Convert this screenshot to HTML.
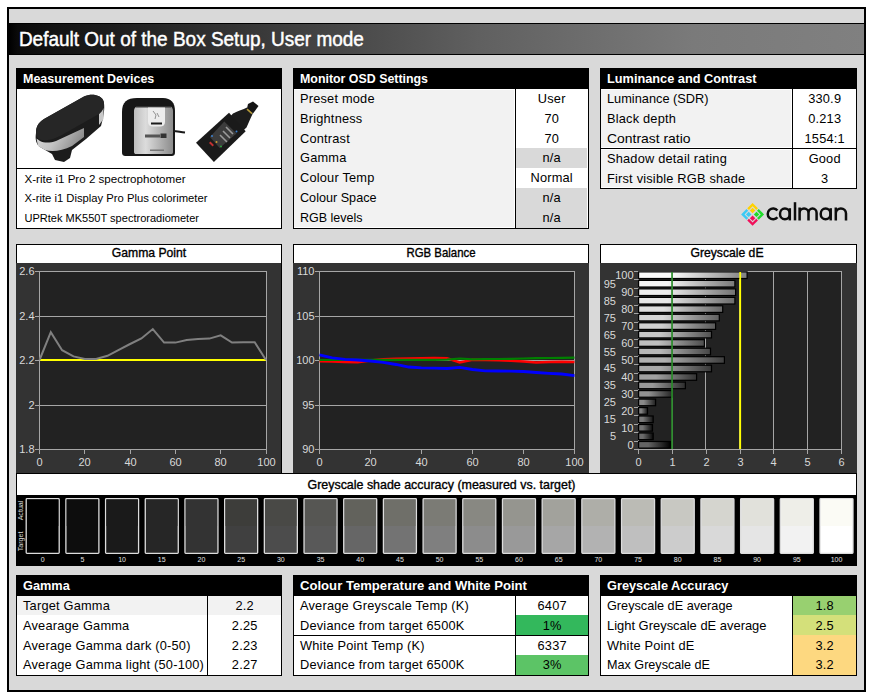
<!DOCTYPE html><html><head><meta charset="utf-8"><style>html,body{margin:0;padding:0;background:#fff;width:873px;height:692px;overflow:hidden}svg{display:block}</style></head><body><svg width="873" height="692" viewBox="0 0 873 692" font-family="'Liberation Sans', sans-serif">
<defs>
<linearGradient id="tg" x1="0" x2="1" y1="0" y2="0">
<stop offset="0" stop-color="#000"/><stop offset="0.01" stop-color="#0a0a0a"/><stop offset="0.05" stop-color="#121212"/>
<stop offset="0.3" stop-color="#3a3a3a"/><stop offset="0.55" stop-color="#606060"/><stop offset="0.8" stop-color="#7a7a7a"/><stop offset="1" stop-color="#808080"/>
</linearGradient>
</defs>
<rect x="0" y="0" width="873" height="692" fill="#fff" />
<rect x="7" y="7" width="859" height="685" fill="#000" />
<rect x="9" y="9" width="855" height="681" fill="#d9d9d9" />
<rect x="9" y="23" width="855" height="32" fill="#000" />
<rect x="9" y="24" width="855" height="30" fill="url(#tg)" />
<text x="18.9" y="45.6" font-size="19.8" fill="#fff" font-weight="normal" text-anchor="start" stroke="#fff" stroke-width="0.45" textLength="345" lengthAdjust="spacingAndGlyphs">Default Out of the Box Setup, User mode</text>
<rect x="16" y="68" width="266" height="161" fill="#000" />
<rect x="17" y="69" width="264" height="159" fill="#fff" />
<rect x="16" y="68" width="266" height="21" fill="#000" />
<text x="23" y="83" font-size="12.5" fill="#fff" font-weight="bold" text-anchor="start" >Measurement Devices</text>
<rect x="16" y="168" width="266" height="1" fill="#000" />
<text x="24.5" y="182.6" font-size="11.5" fill="#000" font-weight="normal" text-anchor="start"  textLength="161" lengthAdjust="spacingAndGlyphs">X-rite i1 Pro 2 spectrophotomer</text>
<text x="24.5" y="202.4" font-size="11.5" fill="#000" font-weight="normal" text-anchor="start"  textLength="183" lengthAdjust="spacingAndGlyphs">X-rite i1 Display Pro Plus colorimeter</text>
<text x="24.5" y="222.2" font-size="11.5" fill="#000" font-weight="normal" text-anchor="start"  textLength="174.5" lengthAdjust="spacingAndGlyphs">UPRtek MK550T spectroradiometer</text>
<g>
<defs><linearGradient id="sil1" x1="0" y1="0" x2="1" y2="0.3"><stop offset="0" stop-color="#d8d8d8"/><stop offset="0.5" stop-color="#c4c4c4"/><stop offset="1" stop-color="#8c8c8c"/></linearGradient></defs>
<path d="M36 133 C36 127 38 123 44 119 L84 96.5 C92 93 101 95 103.5 101 C105 106 104 113 103 118 L101 126 L86 139 L72 150 L70 158 L64 162 L55 160 L52 154 L40 147 C36 144 35 139 36 133 Z" fill="#1c1c1c"/>
<path d="M36.5 138.5 L40 141 C44 143 50 143 56 141 L84 128 L84 137 L72 146 C62 151 52 152 45 150 L38 146 Z" fill="url(#sil1)"/>
<path d="M99 114 L103.5 108 L103.5 119 L99 125 Z" fill="#c8c8c8"/>
<path d="M36 133 C36 127 38 123 44 119 L84 96.5 C92 93 101 95 103.5 101 C105 106 103 111 99 114 L60 136 C52 140 44 142 39 139 C36.5 137.5 36 135 36 133 Z" fill="#262626"/>
<defs><linearGradient id="d2" x1="0" x2="1"><stop offset="0" stop-color="#bdbdbd"/><stop offset="0.3" stop-color="#dcdcdc"/><stop offset="0.65" stop-color="#b4b4b4"/><stop offset="1" stop-color="#8c8c8c"/></linearGradient></defs>
<path d="M122 112 C122 102 127 98 137 98 L163 98 C171 98 175 103 175 111 L175 152 C175 155 174 156 171 156 L126 156 C123 156 122 155 122 152 Z" fill="#161616"/>
<path d="M134 111 C134 108 136 106 139 106 L169 106 C171.5 106 173 108 173 111 L173 152 C173 153.5 172.5 154 171 154 L136 154 C135 154 134 153.5 134 152 Z" fill="url(#d2)"/>
<rect x="136" y="106" width="35" height="1.5" fill="#333"/>
<path d="M148 107.5 L165 107.5 L165 122 C165 125 163 126.5 160 126.5 L153 126.5 C150 126.5 148 125 148 122 Z" fill="#ececec"/>
<path d="M153 111 L156 115 L155 119 M157 113 L159 117" stroke="#777" stroke-width="0.8" fill="none"/>
<rect x="151" y="122.5" width="11" height="2" fill="#1a1a1a"/>
<rect x="145" y="134.5" width="15" height="3" fill="#555"/>
<rect x="160.5" y="133.5" width="6" height="4.5" fill="#333"/>
<rect x="150" y="149.5" width="14" height="1.5" fill="#777"/>
<path d="M173 131 C177 131 180 132 185 132.5" stroke="#1a1a1a" stroke-width="2.2" fill="none"/>
<path d="M227 120 L233 113.5 C238 111 243 109.5 247 107.5 L252.8 113.5 C251 117 249 122 246.5 127.5 L239.5 134 Z" fill="#1c1c1c"/>
<path d="M248 104 L253 101.5 L258.5 106 L253 113.5 L247 108.5 Z" fill="#151515"/>
<path d="M247.5 108.5 L252.5 113 L251.5 114.2 L246.5 109.7 Z" fill="#b59a3a"/>
<path d="M196 142.8 L229 112.7 L245.7 131.2 L213.9 161.9 Z" fill="#1a1a1a"/>
<path d="M224.3 121.4 L236.5 133.5 L219.7 148 L209.9 137 Z" fill="#3c3c3c"/>
<path d="M226 127 L233 134 M223 131 L230 138 M220 135 L227 142" stroke="#9a9a9a" stroke-width="1.6"/>
<rect x="209" y="143" width="5" height="2" fill="#c03030" transform="rotate(45 211.5 144)"/>
<circle cx="212" cy="136" r="1" fill="#3a7fd0"/><circle cx="216.5" cy="142" r="1" fill="#d0a030"/><circle cx="221" cy="146.5" r="1" fill="#30a040"/><circle cx="236.5" cy="131.5" r="1" fill="#3a7fd0"/>
</g>
<rect x="293" y="68" width="296" height="161" fill="#000" />
<rect x="294" y="69" width="294" height="159" fill="#fff" />
<rect x="293" y="68" width="296" height="21" fill="#000" />
<text x="300" y="83" font-size="12.75" fill="#fff" font-weight="bold" text-anchor="start"  textLength="128" lengthAdjust="spacingAndGlyphs">Monitor OSD Settings</text>
<rect x="294" y="90" width="220" height="137" fill="#f2f2f2" />
<rect x="515" y="89" width="1" height="139" fill="#000" />
<text x="300" y="102.9" font-size="12.8" fill="#000" font-weight="normal" text-anchor="start"  letter-spacing="0.2">Preset mode</text>
<text x="551.7" y="102.9" font-size="12.8" fill="#000" font-weight="normal" text-anchor="middle"  letter-spacing="0.2">User</text>
<text x="300" y="122.76" font-size="12.8" fill="#000" font-weight="normal" text-anchor="start"  letter-spacing="0.2">Brightness</text>
<text x="551.7" y="122.76" font-size="12.8" fill="#000" font-weight="normal" text-anchor="middle"  letter-spacing="0.2">70</text>
<text x="300" y="142.62" font-size="12.8" fill="#000" font-weight="normal" text-anchor="start"  letter-spacing="0.2">Contrast</text>
<text x="551.7" y="142.62" font-size="12.8" fill="#000" font-weight="normal" text-anchor="middle"  letter-spacing="0.2">70</text>
<rect x="516" y="148" width="71" height="20" fill="#d9d9d9" />
<text x="300" y="162.48000000000002" font-size="12.8" fill="#000" font-weight="normal" text-anchor="start"  letter-spacing="0.2">Gamma</text>
<text x="551.7" y="162.48000000000002" font-size="12.8" fill="#000" font-weight="normal" text-anchor="middle"  letter-spacing="0.2">n/a</text>
<text x="300" y="182.34" font-size="12.8" fill="#000" font-weight="normal" text-anchor="start"  letter-spacing="0.2">Colour Temp</text>
<text x="551.7" y="182.34" font-size="12.8" fill="#000" font-weight="normal" text-anchor="middle"  letter-spacing="0.2">Normal</text>
<rect x="516" y="188" width="71" height="20" fill="#d9d9d9" />
<text x="300" y="202.2" font-size="12.8" fill="#000" font-weight="normal" text-anchor="start"  textLength="76.5" lengthAdjust="spacingAndGlyphs">Colour Space</text>
<text x="551.7" y="202.2" font-size="12.8" fill="#000" font-weight="normal" text-anchor="middle"  letter-spacing="0.2">n/a</text>
<rect x="516" y="208" width="71" height="20" fill="#d9d9d9" />
<text x="300" y="222.06" font-size="12.8" fill="#000" font-weight="normal" text-anchor="start"  textLength="62.5" lengthAdjust="spacingAndGlyphs">RGB levels</text>
<text x="551.7" y="222.06" font-size="12.8" fill="#000" font-weight="normal" text-anchor="middle"  letter-spacing="0.2">n/a</text>
<rect x="600" y="68" width="257" height="121" fill="#000" />
<rect x="601" y="69" width="255" height="119" fill="#fff" />
<rect x="600" y="68" width="257" height="21" fill="#000" />
<text x="607" y="83" font-size="12.75" fill="#fff" font-weight="bold" text-anchor="start" >Luminance and Contrast</text>
<rect x="601" y="90" width="190" height="57" fill="#f2f2f2" />
<rect x="601" y="150" width="190" height="37" fill="#f2f2f2" />
<rect x="792" y="89" width="1" height="99" fill="#000" />
<rect x="600" y="148" width="257" height="1" fill="#000" />
<text x="607" y="102.9" font-size="12.8" fill="#000" font-weight="normal" text-anchor="start"  textLength="101.5" lengthAdjust="spacingAndGlyphs">Luminance (SDR)</text>
<text x="824.7" y="102.9" font-size="12.8" fill="#000" font-weight="normal" text-anchor="middle"  letter-spacing="0.2">330.9</text>
<text x="607" y="122.76" font-size="12.8" fill="#000" font-weight="normal" text-anchor="start"  letter-spacing="0.2">Black depth</text>
<text x="824.7" y="122.76" font-size="12.8" fill="#000" font-weight="normal" text-anchor="middle"  letter-spacing="0.2">0.213</text>
<text x="607" y="142.62" font-size="12.8" fill="#000" font-weight="normal" text-anchor="start"  textLength="83.5" lengthAdjust="spacingAndGlyphs">Contrast ratio</text>
<text x="824.7" y="142.62" font-size="12.8" fill="#000" font-weight="normal" text-anchor="middle"  letter-spacing="0.2">1554:1</text>
<text x="607" y="163.18" font-size="12.8" fill="#000" font-weight="normal" text-anchor="start"  letter-spacing="0.2">Shadow detail rating</text>
<text x="824.7" y="163.18" font-size="12.8" fill="#000" font-weight="normal" text-anchor="middle"  letter-spacing="0.2">Good</text>
<text x="607" y="183.04" font-size="12.8" fill="#000" font-weight="normal" text-anchor="start"  letter-spacing="0.2">First visible RGB shade</text>
<text x="824.7" y="183.04" font-size="12.8" fill="#000" font-weight="normal" text-anchor="middle"  letter-spacing="0.2">3</text>
<g transform="translate(752.6 214.4) rotate(45)">
<g transform="scale(1 1)"><path d="M-8.1 -8.1 L-0.55 -8.1 L-0.55 -5.699999999999999 L-5.699999999999999 -5.699999999999999 L-5.699999999999999 -0.55 L-8.1 -0.55 Z M-4.699999999999999 -4.699999999999999 L-0.8500000000000001 -4.699999999999999 L-0.8500000000000001 -0.8500000000000001 L-4.699999999999999 -0.8500000000000001 Z" fill="#ffd200"/></g>
<g transform="scale(-1 1)"><path d="M-8.1 -8.1 L-0.55 -8.1 L-0.55 -5.699999999999999 L-5.699999999999999 -5.699999999999999 L-5.699999999999999 -0.55 L-8.1 -0.55 Z M-4.699999999999999 -4.699999999999999 L-0.8500000000000001 -4.699999999999999 L-0.8500000000000001 -0.8500000000000001 L-4.699999999999999 -0.8500000000000001 Z" fill="#1fdc2a"/></g>
<g transform="scale(1 -1)"><path d="M-8.1 -8.1 L-0.55 -8.1 L-0.55 -5.699999999999999 L-5.699999999999999 -5.699999999999999 L-5.699999999999999 -0.55 L-8.1 -0.55 Z M-4.699999999999999 -4.699999999999999 L-0.8500000000000001 -4.699999999999999 L-0.8500000000000001 -0.8500000000000001 L-4.699999999999999 -0.8500000000000001 Z" fill="#3ccaf5"/></g>
<g transform="scale(-1 -1)"><path d="M-8.1 -8.1 L-0.55 -8.1 L-0.55 -5.699999999999999 L-5.699999999999999 -5.699999999999999 L-5.699999999999999 -0.55 L-8.1 -0.55 Z M-4.699999999999999 -4.699999999999999 L-0.8500000000000001 -4.699999999999999 L-0.8500000000000001 -0.8500000000000001 L-4.699999999999999 -0.8500000000000001 Z" fill="#f0105a"/></g>
</g>
<g fill="none" stroke="#0d0d0d" stroke-width="2.5"><path d="M777.4 210.6 A5.4 5.4 0 1 0 777.4 217.2"/><ellipse cx="784.9" cy="213.9" rx="4.9" ry="5.35"/><path d="M789.8 208.2 V220.4"/><path d="M795 202.2 V220.4"/><path d="M799.6 207.6 V220.4 M799.6 213 A4.45 4.4 0 0 1 808.5 213 V220.4 M808.5 213 A4.05 4.4 0 0 1 816.6 213 V220.4"/><ellipse cx="825.6" cy="213.9" rx="4.9" ry="5.35"/><path d="M830.7 208.2 V220.4"/><path d="M835.8 207.6 V220.4 M835.8 213.6 A5.1 5.1 0 0 1 846 213.6 V220.4"/></g>
<rect x="16" y="244" width="266" height="19" fill="#000" />
<rect x="17" y="245" width="264" height="18" fill="#fff" />
<rect x="16" y="263" width="266" height="210" fill="#333333" />
<text x="149.0" y="257" font-size="12.2" fill="#000" font-weight="normal" text-anchor="middle" stroke="#000" stroke-width="0.35" textLength="74.5" lengthAdjust="spacingAndGlyphs">Gamma Point</text>
<rect x="281" y="263" width="1" height="210" fill="#000" />
<rect x="39" y="271" width="228" height="179" fill="#a6a6a6" />
<rect x="40" y="272" width="226" height="177" fill="#222222" />
<rect x="35" y="271" width="4" height="1" fill="#a6a6a6" />
<text x="34.5" y="275.3" font-size="11" fill="#d9d9d9" font-weight="normal" text-anchor="end" >2.6</text>
<rect x="39" y="316" width="228" height="1" fill="#a6a6a6" />
<rect x="35" y="316" width="4" height="1" fill="#a6a6a6" />
<text x="34.5" y="320.3" font-size="11" fill="#d9d9d9" font-weight="normal" text-anchor="end" >2.4</text>
<rect x="39" y="360" width="228" height="1" fill="#a6a6a6" />
<rect x="35" y="360" width="4" height="1" fill="#a6a6a6" />
<text x="34.5" y="364.3" font-size="11" fill="#d9d9d9" font-weight="normal" text-anchor="end" >2.2</text>
<rect x="39" y="405" width="228" height="1" fill="#a6a6a6" />
<rect x="35" y="405" width="4" height="1" fill="#a6a6a6" />
<text x="34.5" y="409.3" font-size="11" fill="#d9d9d9" font-weight="normal" text-anchor="end" >2</text>
<rect x="35" y="449" width="4" height="1" fill="#a6a6a6" />
<text x="34.5" y="453.3" font-size="11" fill="#d9d9d9" font-weight="normal" text-anchor="end" >1.8</text>
<rect x="39" y="449" width="1" height="5" fill="#a6a6a6" />
<text x="39.5" y="466" font-size="11" fill="#d9d9d9" font-weight="normal" text-anchor="middle" >0</text>
<rect x="84" y="449" width="1" height="5" fill="#a6a6a6" />
<text x="84.5" y="466" font-size="11" fill="#d9d9d9" font-weight="normal" text-anchor="middle" >20</text>
<rect x="130" y="449" width="1" height="5" fill="#a6a6a6" />
<text x="130.5" y="466" font-size="11" fill="#d9d9d9" font-weight="normal" text-anchor="middle" >40</text>
<rect x="175" y="449" width="1" height="5" fill="#a6a6a6" />
<text x="175.5" y="466" font-size="11" fill="#d9d9d9" font-weight="normal" text-anchor="middle" >60</text>
<rect x="220" y="449" width="1" height="5" fill="#a6a6a6" />
<text x="220.5" y="466" font-size="11" fill="#d9d9d9" font-weight="normal" text-anchor="middle" >80</text>
<rect x="266" y="449" width="1" height="5" fill="#a6a6a6" />
<text x="266.5" y="466" font-size="11" fill="#d9d9d9" font-weight="normal" text-anchor="middle" >100</text>
<rect x="40" y="359" width="226" height="2" fill="#ffff00" />
<polyline points="39.5,360.0 50.8,332.2 62.1,350.2 73.5,356.4 84.8,358.9 96.1,358.9 107.5,355.8 118.8,349.8 130.1,344.0 141.4,338.4 152.8,329.1 164.1,342.6 175.4,342.6 186.7,340.0 198.1,339.1 209.4,338.6 220.7,335.3 232.0,342.6 243.3,342.2 254.7,342.2 266.0,360.0" fill="none" stroke="#808080" stroke-width="2" stroke-linejoin="miter"/>
<rect x="293" y="244" width="296" height="19" fill="#000" />
<rect x="294" y="245" width="294" height="18" fill="#fff" />
<rect x="293" y="263" width="296" height="210" fill="#333333" />
<text x="441.0" y="257" font-size="12.2" fill="#000" font-weight="normal" text-anchor="middle" stroke="#000" stroke-width="0.35" textLength="69" lengthAdjust="spacingAndGlyphs">RGB Balance</text>
<rect x="319" y="271" width="256" height="179" fill="#a6a6a6" />
<rect x="320" y="272" width="254" height="177" fill="#222222" />
<rect x="315" y="271" width="4" height="1" fill="#a6a6a6" />
<text x="314.5" y="275.3" font-size="11" fill="#d9d9d9" font-weight="normal" text-anchor="end" >110</text>
<rect x="319" y="316" width="256" height="1" fill="#a6a6a6" />
<rect x="315" y="316" width="4" height="1" fill="#a6a6a6" />
<text x="314.5" y="320.3" font-size="11" fill="#d9d9d9" font-weight="normal" text-anchor="end" >105</text>
<rect x="319" y="360" width="256" height="1" fill="#a6a6a6" />
<rect x="315" y="360" width="4" height="1" fill="#a6a6a6" />
<text x="314.5" y="364.3" font-size="11" fill="#d9d9d9" font-weight="normal" text-anchor="end" >100</text>
<rect x="319" y="405" width="256" height="1" fill="#a6a6a6" />
<rect x="315" y="405" width="4" height="1" fill="#a6a6a6" />
<text x="314.5" y="409.3" font-size="11" fill="#d9d9d9" font-weight="normal" text-anchor="end" >95</text>
<rect x="315" y="449" width="4" height="1" fill="#a6a6a6" />
<text x="314.5" y="453.3" font-size="11" fill="#d9d9d9" font-weight="normal" text-anchor="end" >90</text>
<rect x="319" y="449" width="1" height="5" fill="#a6a6a6" />
<text x="319.5" y="466" font-size="11" fill="#d9d9d9" font-weight="normal" text-anchor="middle" >0</text>
<rect x="370" y="449" width="1" height="5" fill="#a6a6a6" />
<text x="370.5" y="466" font-size="11" fill="#d9d9d9" font-weight="normal" text-anchor="middle" >20</text>
<rect x="421" y="449" width="1" height="5" fill="#a6a6a6" />
<text x="421.5" y="466" font-size="11" fill="#d9d9d9" font-weight="normal" text-anchor="middle" >40</text>
<rect x="472" y="449" width="1" height="5" fill="#a6a6a6" />
<text x="472.5" y="466" font-size="11" fill="#d9d9d9" font-weight="normal" text-anchor="middle" >60</text>
<rect x="523" y="449" width="1" height="5" fill="#a6a6a6" />
<text x="523.5" y="466" font-size="11" fill="#d9d9d9" font-weight="normal" text-anchor="middle" >80</text>
<rect x="574" y="449" width="1" height="5" fill="#a6a6a6" />
<text x="574.5" y="466" font-size="11" fill="#d9d9d9" font-weight="normal" text-anchor="middle" >100</text>
<polyline points="319.5,361.3 332.2,361.6 345.0,362.0 357.8,362.2 370.5,360.5 383.2,359.3 396.0,358.8 408.8,358.5 421.5,358.2 434.2,358.0 447.0,358.2 459.8,362.4 472.5,359.8 485.2,360.0 498.0,360.3 510.8,360.8 523.5,361.5 536.2,362.4 549.0,362.0 561.8,361.8 574.5,362.0" fill="none" stroke="#ff0000" stroke-width="2.5"/>
<polyline points="319.5,360.0 332.2,360.0 345.0,359.9 357.8,359.9 370.5,359.8 383.2,359.8 396.0,359.8 408.8,359.8 421.5,359.8 434.2,359.8 447.0,359.6 459.8,358.5 472.5,359.3 485.2,359.2 498.0,359.0 510.8,358.8 523.5,358.5 536.2,358.2 549.0,358.0 561.8,357.8 574.5,357.7" fill="none" stroke="#008000" stroke-width="2.2"/>
<polyline points="319.5,354.9 332.2,357.8 345.0,359.3 357.8,360.0 370.5,361.0 383.2,362.3 396.0,364.5 408.8,367.0 421.5,367.8 434.2,368.2 447.0,368.5 459.8,367.3 472.5,369.5 485.2,370.8 498.0,371.0 510.8,371.2 523.5,371.5 536.2,372.5 549.0,373.3 561.8,374.0 574.5,375.6" fill="none" stroke="#0000ff" stroke-width="2.8"/>
<rect x="600" y="244" width="257" height="19" fill="#000" />
<rect x="601" y="245" width="255" height="18" fill="#fff" />
<rect x="600" y="263" width="257" height="210" fill="#333333" />
<text x="727.0" y="257" font-size="12.2" fill="#000" font-weight="normal" text-anchor="middle" stroke="#000" stroke-width="0.35" textLength="73" lengthAdjust="spacingAndGlyphs">Greyscale dE</text>
<rect x="638" y="271" width="204" height="179" fill="#a6a6a6" />
<rect x="639" y="272" width="202" height="177" fill="#222222" />
<rect x="672" y="271" width="1" height="178" fill="#a6a6a6" />
<rect x="705" y="271" width="1" height="178" fill="#a6a6a6" />
<rect x="739" y="271" width="1" height="178" fill="#a6a6a6" />
<rect x="773" y="271" width="1" height="178" fill="#a6a6a6" />
<rect x="807" y="271" width="1" height="178" fill="#a6a6a6" />
<rect x="638" y="449" width="1" height="5" fill="#a6a6a6" />
<text x="638.5" y="466" font-size="11" fill="#d9d9d9" font-weight="normal" text-anchor="middle" >0</text>
<rect x="672" y="449" width="1" height="5" fill="#a6a6a6" />
<text x="672.5" y="466" font-size="11" fill="#d9d9d9" font-weight="normal" text-anchor="middle" >1</text>
<rect x="706" y="449" width="1" height="5" fill="#a6a6a6" />
<text x="706.5" y="466" font-size="11" fill="#d9d9d9" font-weight="normal" text-anchor="middle" >2</text>
<rect x="740" y="449" width="1" height="5" fill="#a6a6a6" />
<text x="740.5" y="466" font-size="11" fill="#d9d9d9" font-weight="normal" text-anchor="middle" >3</text>
<rect x="773" y="449" width="1" height="5" fill="#a6a6a6" />
<text x="773.5" y="466" font-size="11" fill="#d9d9d9" font-weight="normal" text-anchor="middle" >4</text>
<rect x="807" y="449" width="1" height="5" fill="#a6a6a6" />
<text x="807.5" y="466" font-size="11" fill="#d9d9d9" font-weight="normal" text-anchor="middle" >5</text>
<rect x="841" y="449" width="1" height="5" fill="#a6a6a6" />
<text x="841.5" y="466" font-size="11" fill="#d9d9d9" font-weight="normal" text-anchor="middle" >6</text>
<defs>
<linearGradient id="b0" x1="0" x2="1"><stop offset="0" stop-color="rgb(100,100,100)"/><stop offset="0.3" stop-color="rgb(100,100,100)"/><stop offset="1" stop-color="rgb(0,0,0)"/></linearGradient>
<linearGradient id="b1" x1="0" x2="1"><stop offset="0" stop-color="rgb(107,107,107)"/><stop offset="0.3" stop-color="rgb(107,107,107)"/><stop offset="1" stop-color="rgb(6,6,6)"/></linearGradient>
<linearGradient id="b2" x1="0" x2="1"><stop offset="0" stop-color="rgb(115,115,115)"/><stop offset="0.3" stop-color="rgb(115,115,115)"/><stop offset="1" stop-color="rgb(12,12,12)"/></linearGradient>
<linearGradient id="b3" x1="0" x2="1"><stop offset="0" stop-color="rgb(122,122,122)"/><stop offset="0.3" stop-color="rgb(122,122,122)"/><stop offset="1" stop-color="rgb(19,19,19)"/></linearGradient>
<linearGradient id="b4" x1="0" x2="1"><stop offset="0" stop-color="rgb(130,130,130)"/><stop offset="0.3" stop-color="rgb(130,130,130)"/><stop offset="1" stop-color="rgb(25,25,25)"/></linearGradient>
<linearGradient id="b5" x1="0" x2="1"><stop offset="0" stop-color="rgb(138,138,138)"/><stop offset="0.3" stop-color="rgb(138,138,138)"/><stop offset="1" stop-color="rgb(31,31,31)"/></linearGradient>
<linearGradient id="b6" x1="0" x2="1"><stop offset="0" stop-color="rgb(145,145,145)"/><stop offset="0.3" stop-color="rgb(145,145,145)"/><stop offset="1" stop-color="rgb(38,38,38)"/></linearGradient>
<linearGradient id="b7" x1="0" x2="1"><stop offset="0" stop-color="rgb(153,153,153)"/><stop offset="0.3" stop-color="rgb(153,153,153)"/><stop offset="1" stop-color="rgb(44,44,44)"/></linearGradient>
<linearGradient id="b8" x1="0" x2="1"><stop offset="0" stop-color="rgb(161,161,161)"/><stop offset="0.3" stop-color="rgb(161,161,161)"/><stop offset="1" stop-color="rgb(51,51,51)"/></linearGradient>
<linearGradient id="b9" x1="0" x2="1"><stop offset="0" stop-color="rgb(168,168,168)"/><stop offset="0.3" stop-color="rgb(168,168,168)"/><stop offset="1" stop-color="rgb(57,57,57)"/></linearGradient>
<linearGradient id="b10" x1="0" x2="1"><stop offset="0" stop-color="rgb(176,176,176)"/><stop offset="0.3" stop-color="rgb(176,176,176)"/><stop offset="1" stop-color="rgb(63,63,63)"/></linearGradient>
<linearGradient id="b11" x1="0" x2="1"><stop offset="0" stop-color="rgb(184,184,184)"/><stop offset="0.3" stop-color="rgb(184,184,184)"/><stop offset="1" stop-color="rgb(70,70,70)"/></linearGradient>
<linearGradient id="b12" x1="0" x2="1"><stop offset="0" stop-color="rgb(191,191,191)"/><stop offset="0.3" stop-color="rgb(191,191,191)"/><stop offset="1" stop-color="rgb(76,76,76)"/></linearGradient>
<linearGradient id="b13" x1="0" x2="1"><stop offset="0" stop-color="rgb(199,199,199)"/><stop offset="0.3" stop-color="rgb(199,199,199)"/><stop offset="1" stop-color="rgb(82,82,82)"/></linearGradient>
<linearGradient id="b14" x1="0" x2="1"><stop offset="0" stop-color="rgb(207,207,207)"/><stop offset="0.3" stop-color="rgb(207,207,207)"/><stop offset="1" stop-color="rgb(89,89,89)"/></linearGradient>
<linearGradient id="b15" x1="0" x2="1"><stop offset="0" stop-color="rgb(214,214,214)"/><stop offset="0.3" stop-color="rgb(214,214,214)"/><stop offset="1" stop-color="rgb(95,95,95)"/></linearGradient>
<linearGradient id="b16" x1="0" x2="1"><stop offset="0" stop-color="rgb(222,222,222)"/><stop offset="0.3" stop-color="rgb(222,222,222)"/><stop offset="1" stop-color="rgb(102,102,102)"/></linearGradient>
<linearGradient id="b17" x1="0" x2="1"><stop offset="0" stop-color="rgb(230,230,230)"/><stop offset="0.3" stop-color="rgb(230,230,230)"/><stop offset="1" stop-color="rgb(108,108,108)"/></linearGradient>
<linearGradient id="b18" x1="0" x2="1"><stop offset="0" stop-color="rgb(237,237,237)"/><stop offset="0.3" stop-color="rgb(237,237,237)"/><stop offset="1" stop-color="rgb(114,114,114)"/></linearGradient>
<linearGradient id="b19" x1="0" x2="1"><stop offset="0" stop-color="rgb(245,245,245)"/><stop offset="0.3" stop-color="rgb(245,245,245)"/><stop offset="1" stop-color="rgb(121,121,121)"/></linearGradient>
<linearGradient id="b20" x1="0" x2="1"><stop offset="0" stop-color="rgb(252,252,252)"/><stop offset="0.3" stop-color="rgb(252,252,252)"/><stop offset="1" stop-color="rgb(127,127,127)"/></linearGradient>
</defs>
<rect x="634" y="449" width="4" height="1" fill="#a6a6a6" />
<rect x="634" y="441" width="4" height="1" fill="#a6a6a6" />
<rect x="634" y="432" width="4" height="1" fill="#a6a6a6" />
<rect x="634" y="424" width="4" height="1" fill="#a6a6a6" />
<rect x="634" y="415" width="4" height="1" fill="#a6a6a6" />
<rect x="634" y="407" width="4" height="1" fill="#a6a6a6" />
<rect x="634" y="398" width="4" height="1" fill="#a6a6a6" />
<rect x="634" y="390" width="4" height="1" fill="#a6a6a6" />
<rect x="634" y="381" width="4" height="1" fill="#a6a6a6" />
<rect x="634" y="373" width="4" height="1" fill="#a6a6a6" />
<rect x="634" y="364" width="4" height="1" fill="#a6a6a6" />
<rect x="634" y="356" width="4" height="1" fill="#a6a6a6" />
<rect x="634" y="347" width="4" height="1" fill="#a6a6a6" />
<rect x="634" y="339" width="4" height="1" fill="#a6a6a6" />
<rect x="634" y="330" width="4" height="1" fill="#a6a6a6" />
<rect x="634" y="322" width="4" height="1" fill="#a6a6a6" />
<rect x="634" y="313" width="4" height="1" fill="#a6a6a6" />
<rect x="634" y="305" width="4" height="1" fill="#a6a6a6" />
<rect x="634" y="296" width="4" height="1" fill="#a6a6a6" />
<rect x="634" y="288" width="4" height="1" fill="#a6a6a6" />
<rect x="634" y="279" width="4" height="1" fill="#a6a6a6" />
<rect x="634" y="271" width="4" height="1" fill="#a6a6a6" />
<rect x="638.6" y="441.5" width="31.9" height="6.6" fill="url(#b0)" stroke="#000" stroke-width="1.2"/>
<text x="633.5" y="448.76190476190476" font-size="11" fill="#d9d9d9" font-weight="normal" text-anchor="end" >0</text>
<rect x="638.6" y="433.0" width="14.6" height="6.6" fill="url(#b1)" stroke="#000" stroke-width="1.2"/>
<text x="616" y="440.2857142857143" font-size="11" fill="#d9d9d9" font-weight="normal" text-anchor="end" >5</text>
<rect x="638.6" y="424.5" width="13.9" height="6.6" fill="url(#b2)" stroke="#000" stroke-width="1.2"/>
<text x="633.5" y="431.8095238095238" font-size="11" fill="#d9d9d9" font-weight="normal" text-anchor="end" >10</text>
<rect x="638.6" y="416.0" width="14.6" height="6.6" fill="url(#b3)" stroke="#000" stroke-width="1.2"/>
<text x="616" y="423.3333333333333" font-size="11" fill="#d9d9d9" font-weight="normal" text-anchor="end" >15</text>
<rect x="638.6" y="407.6" width="8.9" height="6.6" fill="url(#b4)" stroke="#000" stroke-width="1.2"/>
<text x="633.5" y="414.85714285714283" font-size="11" fill="#d9d9d9" font-weight="normal" text-anchor="end" >20</text>
<rect x="638.6" y="399.1" width="17.0" height="6.6" fill="url(#b5)" stroke="#000" stroke-width="1.2"/>
<text x="616" y="406.3809523809524" font-size="11" fill="#d9d9d9" font-weight="normal" text-anchor="end" >25</text>
<rect x="638.6" y="390.6" width="33.6" height="6.6" fill="url(#b6)" stroke="#000" stroke-width="1.2"/>
<text x="633.5" y="397.9047619047619" font-size="11" fill="#d9d9d9" font-weight="normal" text-anchor="end" >30</text>
<rect x="638.6" y="382.1" width="46.8" height="6.6" fill="url(#b7)" stroke="#000" stroke-width="1.2"/>
<text x="616" y="389.42857142857144" font-size="11" fill="#d9d9d9" font-weight="normal" text-anchor="end" >35</text>
<rect x="638.6" y="373.7" width="58.0" height="6.6" fill="url(#b8)" stroke="#000" stroke-width="1.2"/>
<text x="633.5" y="380.95238095238096" font-size="11" fill="#d9d9d9" font-weight="normal" text-anchor="end" >40</text>
<rect x="638.6" y="365.2" width="72.9" height="6.6" fill="url(#b9)" stroke="#000" stroke-width="1.2"/>
<text x="616" y="372.4761904761905" font-size="11" fill="#d9d9d9" font-weight="normal" text-anchor="end" >45</text>
<rect x="638.6" y="356.7" width="85.8" height="6.6" fill="url(#b10)" stroke="#000" stroke-width="1.2"/>
<text x="633.5" y="364.0" font-size="11" fill="#d9d9d9" font-weight="normal" text-anchor="end" >50</text>
<rect x="638.6" y="348.2" width="71.9" height="6.6" fill="url(#b11)" stroke="#000" stroke-width="1.2"/>
<text x="616" y="355.5238095238095" font-size="11" fill="#d9d9d9" font-weight="normal" text-anchor="end" >55</text>
<rect x="638.6" y="339.7" width="65.8" height="6.6" fill="url(#b12)" stroke="#000" stroke-width="1.2"/>
<text x="633.5" y="347.04761904761904" font-size="11" fill="#d9d9d9" font-weight="normal" text-anchor="end" >60</text>
<rect x="638.6" y="331.3" width="72.9" height="6.6" fill="url(#b13)" stroke="#000" stroke-width="1.2"/>
<text x="616" y="338.57142857142856" font-size="11" fill="#d9d9d9" font-weight="normal" text-anchor="end" >65</text>
<rect x="638.6" y="322.8" width="77.0" height="6.6" fill="url(#b14)" stroke="#000" stroke-width="1.2"/>
<text x="633.5" y="330.0952380952381" font-size="11" fill="#d9d9d9" font-weight="normal" text-anchor="end" >70</text>
<rect x="638.6" y="314.3" width="80.7" height="6.6" fill="url(#b15)" stroke="#000" stroke-width="1.2"/>
<text x="616" y="321.6190476190476" font-size="11" fill="#d9d9d9" font-weight="normal" text-anchor="end" >75</text>
<rect x="638.6" y="305.8" width="84.1" height="6.6" fill="url(#b16)" stroke="#000" stroke-width="1.2"/>
<text x="633.5" y="313.1428571428571" font-size="11" fill="#d9d9d9" font-weight="normal" text-anchor="end" >80</text>
<rect x="638.6" y="297.4" width="96.3" height="6.6" fill="url(#b17)" stroke="#000" stroke-width="1.2"/>
<text x="616" y="304.66666666666663" font-size="11" fill="#d9d9d9" font-weight="normal" text-anchor="end" >85</text>
<rect x="638.6" y="288.9" width="97.0" height="6.6" fill="url(#b18)" stroke="#000" stroke-width="1.2"/>
<text x="633.5" y="296.19047619047615" font-size="11" fill="#d9d9d9" font-weight="normal" text-anchor="end" >90</text>
<rect x="638.6" y="280.4" width="96.3" height="6.6" fill="url(#b19)" stroke="#000" stroke-width="1.2"/>
<text x="616" y="287.7142857142857" font-size="11" fill="#d9d9d9" font-weight="normal" text-anchor="end" >95</text>
<rect x="638.6" y="271.9" width="108.5" height="6.6" fill="url(#b20)" stroke="#000" stroke-width="1.2"/>
<text x="633.5" y="279.23809523809524" font-size="11" fill="#d9d9d9" font-weight="normal" text-anchor="end" >100</text>
<rect x="671.2" y="272" width="1.7" height="177" fill="#2a8a2a" />
<rect x="739.3" y="272" width="1.8" height="177" fill="#ffff00" />
<rect x="16" y="473" width="841" height="93" fill="#000" />
<rect x="17" y="474" width="839" height="21" fill="#fff" />
<text x="441.5" y="489" font-size="12.2" fill="#000" font-weight="normal" text-anchor="middle" stroke="#000" stroke-width="0.35" textLength="268" lengthAdjust="spacingAndGlyphs">Greyscale shade accuracy (measured vs. target)</text>
<rect x="26.20" y="498.7" width="33.0" height="54.6" rx="0.8" fill="rgb(0,0,0)" stroke="#dcdcdc" stroke-width="1.3"/>
<rect x="27.10" y="499.6" width="31.2" height="26.4" fill="rgb(0,0,0)"/>
<text x="42.7" y="562" font-size="7" fill="#e2e2e2" font-weight="normal" text-anchor="middle" >0</text>
<rect x="65.89" y="498.7" width="33.0" height="54.6" rx="0.8" fill="rgb(13,13,13)" stroke="#dcdcdc" stroke-width="1.3"/>
<rect x="66.79" y="499.6" width="31.2" height="26.4" fill="rgb(13,13,13)"/>
<text x="82.39" y="562" font-size="7" fill="#e2e2e2" font-weight="normal" text-anchor="middle" >5</text>
<rect x="105.58" y="498.7" width="33.0" height="54.6" rx="0.8" fill="rgb(26,26,26)" stroke="#dcdcdc" stroke-width="1.3"/>
<rect x="106.48" y="499.6" width="31.2" height="26.4" fill="rgb(26,26,26)"/>
<text x="122.08" y="562" font-size="7" fill="#e2e2e2" font-weight="normal" text-anchor="middle" >10</text>
<rect x="145.27" y="498.7" width="33.0" height="54.6" rx="0.8" fill="rgb(38,38,38)" stroke="#dcdcdc" stroke-width="1.3"/>
<rect x="146.17" y="499.6" width="31.2" height="26.4" fill="rgb(38,38,38)"/>
<text x="161.76999999999998" y="562" font-size="7" fill="#e2e2e2" font-weight="normal" text-anchor="middle" >15</text>
<rect x="184.96" y="498.7" width="33.0" height="54.6" rx="0.8" fill="rgb(51,51,51)" stroke="#dcdcdc" stroke-width="1.3"/>
<rect x="185.86" y="499.6" width="31.2" height="26.4" fill="rgb(51,51,51)"/>
<text x="201.45999999999998" y="562" font-size="7" fill="#e2e2e2" font-weight="normal" text-anchor="middle" >20</text>
<rect x="224.65" y="498.7" width="33.0" height="54.6" rx="0.8" fill="rgb(64,64,64)" stroke="#dcdcdc" stroke-width="1.3"/>
<rect x="225.55" y="499.6" width="31.2" height="26.4" fill="rgb(61,61,58)"/>
<text x="241.14999999999998" y="562" font-size="7" fill="#e2e2e2" font-weight="normal" text-anchor="middle" >25</text>
<rect x="264.34" y="498.7" width="33.0" height="54.6" rx="0.8" fill="rgb(76,76,76)" stroke="#dcdcdc" stroke-width="1.3"/>
<rect x="265.24" y="499.6" width="31.2" height="26.4" fill="rgb(73,73,70)"/>
<text x="280.84" y="562" font-size="7" fill="#e2e2e2" font-weight="normal" text-anchor="middle" >30</text>
<rect x="304.03" y="498.7" width="33.0" height="54.6" rx="0.8" fill="rgb(89,89,89)" stroke="#dcdcdc" stroke-width="1.3"/>
<rect x="304.93" y="499.6" width="31.2" height="26.4" fill="rgb(86,86,83)"/>
<text x="320.53" y="562" font-size="7" fill="#e2e2e2" font-weight="normal" text-anchor="middle" >35</text>
<rect x="343.72" y="498.7" width="33.0" height="54.6" rx="0.8" fill="rgb(102,102,102)" stroke="#dcdcdc" stroke-width="1.3"/>
<rect x="344.62" y="499.6" width="31.2" height="26.4" fill="rgb(98,98,92)"/>
<text x="360.21999999999997" y="562" font-size="7" fill="#e2e2e2" font-weight="normal" text-anchor="middle" >40</text>
<rect x="383.41" y="498.7" width="33.0" height="54.6" rx="0.8" fill="rgb(115,115,115)" stroke="#dcdcdc" stroke-width="1.3"/>
<rect x="384.31" y="499.6" width="31.2" height="26.4" fill="rgb(111,111,105)"/>
<text x="399.90999999999997" y="562" font-size="7" fill="#e2e2e2" font-weight="normal" text-anchor="middle" >45</text>
<rect x="423.10" y="498.7" width="33.0" height="54.6" rx="0.8" fill="rgb(127,127,127)" stroke="#dcdcdc" stroke-width="1.3"/>
<rect x="424.00" y="499.6" width="31.2" height="26.4" fill="rgb(123,123,117)"/>
<text x="439.59999999999997" y="562" font-size="7" fill="#e2e2e2" font-weight="normal" text-anchor="middle" >50</text>
<rect x="462.79" y="498.7" width="33.0" height="54.6" rx="0.8" fill="rgb(140,140,140)" stroke="#dcdcdc" stroke-width="1.3"/>
<rect x="463.69" y="499.6" width="31.2" height="26.4" fill="rgb(136,136,130)"/>
<text x="479.28999999999996" y="562" font-size="7" fill="#e2e2e2" font-weight="normal" text-anchor="middle" >55</text>
<rect x="502.48" y="498.7" width="33.0" height="54.6" rx="0.8" fill="rgb(153,153,153)" stroke="#dcdcdc" stroke-width="1.3"/>
<rect x="503.38" y="499.6" width="31.2" height="26.4" fill="rgb(149,149,143)"/>
<text x="518.98" y="562" font-size="7" fill="#e2e2e2" font-weight="normal" text-anchor="middle" >60</text>
<rect x="542.17" y="498.7" width="33.0" height="54.6" rx="0.8" fill="rgb(166,166,166)" stroke="#dcdcdc" stroke-width="1.3"/>
<rect x="543.07" y="499.6" width="31.2" height="26.4" fill="rgb(162,162,156)"/>
<text x="558.6700000000001" y="562" font-size="7" fill="#e2e2e2" font-weight="normal" text-anchor="middle" >65</text>
<rect x="581.86" y="498.7" width="33.0" height="54.6" rx="0.8" fill="rgb(178,178,178)" stroke="#dcdcdc" stroke-width="1.3"/>
<rect x="582.76" y="499.6" width="31.2" height="26.4" fill="rgb(174,174,168)"/>
<text x="598.36" y="562" font-size="7" fill="#e2e2e2" font-weight="normal" text-anchor="middle" >70</text>
<rect x="621.55" y="498.7" width="33.0" height="54.6" rx="0.8" fill="rgb(191,191,191)" stroke="#dcdcdc" stroke-width="1.3"/>
<rect x="622.45" y="499.6" width="31.2" height="26.4" fill="rgb(187,187,181)"/>
<text x="638.05" y="562" font-size="7" fill="#e2e2e2" font-weight="normal" text-anchor="middle" >75</text>
<rect x="661.24" y="498.7" width="33.0" height="54.6" rx="0.8" fill="rgb(204,204,204)" stroke="#dcdcdc" stroke-width="1.3"/>
<rect x="662.14" y="499.6" width="31.2" height="26.4" fill="rgb(200,200,194)"/>
<text x="677.74" y="562" font-size="7" fill="#e2e2e2" font-weight="normal" text-anchor="middle" >80</text>
<rect x="700.93" y="498.7" width="33.0" height="54.6" rx="0.8" fill="rgb(217,217,217)" stroke="#dcdcdc" stroke-width="1.3"/>
<rect x="701.83" y="499.6" width="31.2" height="26.4" fill="rgb(213,213,207)"/>
<text x="717.4300000000001" y="562" font-size="7" fill="#e2e2e2" font-weight="normal" text-anchor="middle" >85</text>
<rect x="740.62" y="498.7" width="33.0" height="54.6" rx="0.8" fill="rgb(229,229,229)" stroke="#dcdcdc" stroke-width="1.3"/>
<rect x="741.52" y="499.6" width="31.2" height="26.4" fill="rgb(225,225,219)"/>
<text x="757.12" y="562" font-size="7" fill="#e2e2e2" font-weight="normal" text-anchor="middle" >90</text>
<rect x="780.31" y="498.7" width="33.0" height="54.6" rx="0.8" fill="rgb(242,242,242)" stroke="#dcdcdc" stroke-width="1.3"/>
<rect x="781.21" y="499.6" width="31.2" height="26.4" fill="rgb(238,238,232)"/>
<text x="796.81" y="562" font-size="7" fill="#e2e2e2" font-weight="normal" text-anchor="middle" >95</text>
<rect x="820.00" y="498.7" width="33.0" height="54.6" rx="0.8" fill="rgb(255,255,255)" stroke="#dcdcdc" stroke-width="1.3"/>
<rect x="820.90" y="499.6" width="31.2" height="26.4" fill="rgb(251,251,245)"/>
<text x="836.5" y="562" font-size="7" fill="#e2e2e2" font-weight="normal" text-anchor="middle" >100</text>
<text x="0" y="0" font-size="7.1" fill="#d8d8d8" font-weight="normal" text-anchor="middle" transform="translate(23.2 510.5) rotate(-90)">Actual</text>
<text x="0" y="0" font-size="7.1" fill="#d8d8d8" font-weight="normal" text-anchor="middle" transform="translate(23.2 541.5) rotate(-90)">Target</text>
<rect x="16" y="575" width="266" height="101" fill="#000" />
<rect x="17" y="576" width="264" height="99" fill="#fff" />
<rect x="16" y="575" width="266" height="21" fill="#000" />
<text x="23" y="589.5" font-size="12.75" fill="#fff" font-weight="bold" text-anchor="start" >Gamma</text>
<rect x="17" y="596" width="190" height="19" fill="#f2f2f2" />
<rect x="208" y="596" width="73" height="19" fill="#f2f2f2" />
<text x="23" y="610.2" font-size="12.8" fill="#000" font-weight="normal" text-anchor="start"  letter-spacing="0.2">Target Gamma</text>
<text x="244.7" y="610.2" font-size="12.8" fill="#000" font-weight="normal" text-anchor="middle"  letter-spacing="0.2">2.2</text>
<text x="23" y="629.95" font-size="12.8" fill="#000" font-weight="normal" text-anchor="start"  letter-spacing="0.2">Avearage Gamma</text>
<text x="244.7" y="629.95" font-size="12.8" fill="#000" font-weight="normal" text-anchor="middle"  letter-spacing="0.2">2.25</text>
<text x="23" y="649.7" font-size="12.8" fill="#000" font-weight="normal" text-anchor="start"  letter-spacing="0.2">Average Gamma dark (0-50)</text>
<text x="244.7" y="649.7" font-size="12.8" fill="#000" font-weight="normal" text-anchor="middle"  letter-spacing="0.2">2.23</text>
<text x="23" y="669.45" font-size="12.8" fill="#000" font-weight="normal" text-anchor="start"  letter-spacing="0.2">Average Gamma light (50-100)</text>
<text x="244.7" y="669.45" font-size="12.8" fill="#000" font-weight="normal" text-anchor="middle"  letter-spacing="0.2">2.27</text>
<rect x="207" y="596" width="1" height="80" fill="#000" />
<rect x="293" y="575" width="296" height="101" fill="#000" />
<rect x="294" y="576" width="294" height="99" fill="#fff" />
<rect x="293" y="575" width="296" height="21" fill="#000" />
<text x="300" y="589.5" font-size="12.75" fill="#fff" font-weight="bold" text-anchor="start"  textLength="227" lengthAdjust="spacingAndGlyphs">Colour Temperature and White Point</text>
<text x="300" y="610.2" font-size="12.8" fill="#000" font-weight="normal" text-anchor="start"  letter-spacing="0.2">Average Greyscale Temp (K)</text>
<text x="552.2" y="610.2" font-size="12.8" fill="#000" font-weight="normal" text-anchor="middle"  letter-spacing="0.2">6407</text>
<rect x="516" y="615" width="72" height="20" fill="#33b85c" />
<text x="300" y="629.95" font-size="12.8" fill="#000" font-weight="normal" text-anchor="start"  letter-spacing="0.2">Deviance from target 6500K</text>
<text x="552.2" y="629.95" font-size="12.8" fill="#000" font-weight="normal" text-anchor="middle"  letter-spacing="0.2">1%</text>
<text x="300" y="649.7" font-size="12.8" fill="#000" font-weight="normal" text-anchor="start"  letter-spacing="0.2">White Point Temp (K)</text>
<text x="552.2" y="649.7" font-size="12.8" fill="#000" font-weight="normal" text-anchor="middle"  letter-spacing="0.2">6337</text>
<rect x="516" y="655" width="72" height="20" fill="#5cc466" />
<text x="300" y="669.45" font-size="12.8" fill="#000" font-weight="normal" text-anchor="start"  letter-spacing="0.2">Deviance from target 6500K</text>
<text x="552.2" y="669.45" font-size="12.8" fill="#000" font-weight="normal" text-anchor="middle"  letter-spacing="0.2">3%</text>
<rect x="515" y="596" width="1" height="80" fill="#000" />
<rect x="293" y="635" width="296" height="1" fill="#000" />
<rect x="600" y="575" width="257" height="101" fill="#000" />
<rect x="601" y="576" width="255" height="99" fill="#fff" />
<rect x="600" y="575" width="257" height="21" fill="#000" />
<text x="607" y="589.5" font-size="12.75" fill="#fff" font-weight="bold" text-anchor="start" >Greyscale Accuracy</text>
<rect x="793" y="596" width="63" height="19" fill="#98d070" />
<text x="607" y="610.2" font-size="12.8" fill="#000" font-weight="normal" text-anchor="start"  textLength="125.5" lengthAdjust="spacingAndGlyphs">Greyscale dE average</text>
<text x="824.7" y="610.2" font-size="12.8" fill="#000" font-weight="normal" text-anchor="middle"  letter-spacing="0.2">1.8</text>
<rect x="793" y="615" width="63" height="20" fill="#d4e07a" />
<text x="607" y="629.95" font-size="12.8" fill="#000" font-weight="normal" text-anchor="start"  textLength="159.5" lengthAdjust="spacingAndGlyphs">Light Greyscale dE average</text>
<text x="824.7" y="629.95" font-size="12.8" fill="#000" font-weight="normal" text-anchor="middle"  letter-spacing="0.2">2.5</text>
<rect x="793" y="635" width="63" height="20" fill="#fdd880" />
<text x="607" y="649.7" font-size="12.8" fill="#000" font-weight="normal" text-anchor="start"  letter-spacing="0.2">White Point dE</text>
<text x="824.7" y="649.7" font-size="12.8" fill="#000" font-weight="normal" text-anchor="middle"  letter-spacing="0.2">3.2</text>
<rect x="793" y="655" width="63" height="20" fill="#fdd880" />
<text x="607" y="669.45" font-size="12.8" fill="#000" font-weight="normal" text-anchor="start"  textLength="103" lengthAdjust="spacingAndGlyphs">Max Greyscale dE</text>
<text x="824.7" y="669.45" font-size="12.8" fill="#000" font-weight="normal" text-anchor="middle"  letter-spacing="0.2">3.2</text>
<rect x="792" y="596" width="1" height="80" fill="#000" />
</svg></body></html>
